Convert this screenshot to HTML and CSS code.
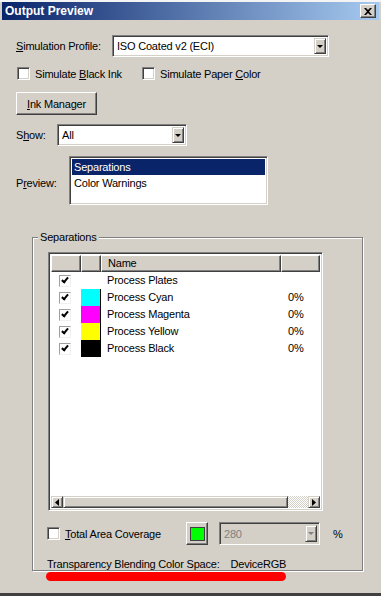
FILE: index.html
```html
<!DOCTYPE html>
<html lang="en">
<head>
<meta charset="UTF-8">
<title>Output Preview</title>
<link rel="stylesheet" href="styles.css">
</head>
<body>

<div class="window">
    <div class="titlebar">
        <span class="title">Output Preview</span>
        <span class="close-btn">
            <svg width="8" height="7" viewBox="0 0 8 7"><path d="M0 0h2l2 2 2-2h2L5 3.5 8 7H6L4 5 2 7H0l3-3.5z" fill="#000"/></svg>
        </span>
    </div>

    <div class="content">
        <div class="row row-profile">
            <span class="label"><u>S</u>imulation Profile:</span>
            <div class="combo combo-profile">
                <span class="combo-text">ISO Coated v2 (ECI)</span>
                <span class="combo-arrow"><i></i></span>
            </div>
        </div>

        <div class="row row-checks">
            <label class="check first"><span class="box"></span><span>Simulate <u>B</u>lack Ink</span></label>
            <label class="check"><span class="box"></span><span>Simulate Paper <u>C</u>olor</span></label>
        </div>

        <div class="row row-button">
            <span class="button"><span><u>I</u>nk Manager</span></span>
        </div>

        <div class="row row-show">
            <span class="label show-label">S<u>h</u>ow:</span>
            <div class="combo combo-show">
                <span class="combo-text">All</span>
                <span class="combo-arrow"><i></i></span>
            </div>
        </div>

        <div class="row row-preview">
            <span class="label preview-label">P<u>r</u>eview:</span>
            <div class="listbox">
                <div class="list-item selected">Separations</div>
                <div class="list-item">Color Warnings</div>
            </div>
        </div>

        <fieldset class="group">
            <legend>Separations</legend>

            <div class="listview">
                <div class="lv-header">
                    <span class="lv-col"></span>
                    <span class="lv-col"></span>
                    <span class="lv-col">Name</span>
                    <span class="lv-col"></span>
                </div>
                <div class="lv-body">
                    <div class="lv-row">
                        <span class="lv-check"><span class="tick"></span></span>
                        <span></span>
                        <span class="lv-name">Process Plates</span>
                        <span class="lv-pct"></span>
                    </div>
                    <div class="lv-row">
                        <span class="lv-check"><span class="tick"></span></span>
                        <span class="swatch cyan"></span>
                        <span class="lv-name">Process Cyan</span>
                        <span class="lv-pct">0%</span>
                    </div>
                    <div class="lv-row">
                        <span class="lv-check"><span class="tick"></span></span>
                        <span class="swatch magenta"></span>
                        <span class="lv-name">Process Magenta</span>
                        <span class="lv-pct">0%</span>
                    </div>
                    <div class="lv-row">
                        <span class="lv-check"><span class="tick"></span></span>
                        <span class="swatch yellow"></span>
                        <span class="lv-name">Process Yellow</span>
                        <span class="lv-pct">0%</span>
                    </div>
                    <div class="lv-row">
                        <span class="lv-check"><span class="tick"></span></span>
                        <span class="swatch black"></span>
                        <span class="lv-name">Process Black</span>
                        <span class="lv-pct">0%</span>
                    </div>
                </div>
                <div class="hscroll">
                    <span class="sb-btn"><svg width="4" height="7" viewBox="0 0 4 7"><path d="M4 0v7L0 3.5z" fill="#000"/></svg></span>
                    <span class="sb-thumb"></span>
                    <span class="sb-track"></span>
                    <span class="sb-btn"><svg width="4" height="7" viewBox="0 0 4 7"><path d="M0 0v7l4-3.5z" fill="#000"/></svg></span>
                </div>
            </div>

            <div class="coverage">
                <label class="check"><span class="box"></span><span><u>T</u>otal Area Coverage</span></label>
                <span class="color-btn"><span class="green"></span></span>
                <div class="combo combo-limit disabled">
                    <span class="combo-text">280</span>
                    <span class="combo-arrow"><i></i></span>
                </div>
                <span class="pct">%</span>
            </div>

            <div class="blend">
                <span>Transparency Blending Color Space:</span>
                <span>DeviceRGB</span>
            </div>
            <div class="mark"></div>
        </fieldset>
    </div>
</div>

</body>
</html>
```

FILE: styles.css
```css
body {
    margin: 0;
    font-family: "Liberation Sans", Arial, sans-serif;
    font-size: 11px;
    letter-spacing: -0.2px;
    color: #000;
    background-color: #d4d0c8;
}
u {
    text-decoration: underline;
    text-underline-offset: 1px;
}
.window {
    height: 596px;
    box-sizing: border-box;
    border-top: 2px solid #f4f4f4;
    border-bottom: 3px solid #404040;
    background-color: #d4d0c8;
}
.titlebar {
    height: 18px;
    margin: 0 2px;
    padding: 0 3px 0 3px;
    display: flex;
    align-items: center;
    justify-content: space-between;
    background: linear-gradient(to right, #0a246a, #a6caf0);
}
.title {
    color: #fff;
    font-weight: bold;
    font-size: 12px;
    letter-spacing: 0;
}
.close-btn {
    width: 16px;
    height: 14px;
    box-sizing: border-box;
    display: flex;
    align-items: center;
    justify-content: center;
    background-color: #d4d0c8;
    border-top: 1px solid #fff;
    border-left: 1px solid #fff;
    border-bottom: 1px solid #404040;
    border-right: 1px solid #404040;
    box-shadow: inset -1px -1px #808080;
}
.content {
    padding: 0 18px 0 16px;
}
.row {
    display: flex;
    align-items: center;
}
.row-profile {
    margin-top: 15px;
}
.label {
    width: 96px;
}
.show-label {
    width: 41px;
}
.preview-label {
    width: 53px;
    padding-top: 4px;
}

/* sunken fields */
.combo, .listbox, .listview {
    box-sizing: border-box;
    background-color: #fff;
    border-top: 1px solid #808080;
    border-left: 1px solid #808080;
    border-bottom: 1px solid #fff;
    border-right: 1px solid #fff;
    box-shadow: inset 1px 1px #404040, inset -1px -1px #d4d0c8;
}
.combo {
    display: flex;
    align-items: stretch;
    padding: 2px;
}
.combo-text {
    flex: 1;
    display: flex;
    align-items: center;
    padding-left: 2px;
}
.combo-arrow {
    width: 12px;
    box-sizing: border-box;
    display: flex;
    align-items: center;
    justify-content: center;
    background-color: #d4d0c8;
    border-top: 1px solid #d4d0c8;
    border-left: 1px solid #d4d0c8;
    border-bottom: 1px solid #404040;
    border-right: 1px solid #404040;
    box-shadow: inset 1px 1px #fff, inset -1px -1px #808080;
}
.combo-arrow i {
    width: 0;
    height: 0;
    border-left: 3px solid transparent;
    border-right: 3px solid transparent;
    border-top: 3px solid #000;
}
.combo-profile {
    width: 217px;
    height: 22px;
}
.combo-show {
    width: 130px;
    height: 22px;
}

/* checkboxes */
.row-checks {
    margin-top: 10px;
    padding-left: 1px;
}
.check {
    display: flex;
    align-items: center;
}
.check.first {
    width: 125px;
}
.box {
    width: 13px;
    height: 13px;
    box-sizing: border-box;
    margin-right: 5px;
    background-color: #fff;
    border-top: 1px solid #808080;
    border-left: 1px solid #808080;
    border-bottom: 1px solid #fff;
    border-right: 1px solid #fff;
    box-shadow: inset 1px 1px #404040, inset -1px -1px #d4d0c8;
}

.row-button {
    margin-top: 12px;
}
.button {
    width: 81px;
    height: 23px;
    box-sizing: border-box;
    display: flex;
    align-items: center;
    justify-content: center;
    border-top: 1px solid #fff;
    border-left: 1px solid #fff;
    border-bottom: 1px solid #404040;
    border-right: 1px solid #404040;
    box-shadow: inset -1px -1px #808080;
}

.row-show {
    margin-top: 9px;
}
.row-preview {
    margin-top: 10px;
}
.listbox {
    width: 199px;
    height: 49px;
    padding: 2px;
}
.list-item {
    height: 16px;
    line-height: 16px;
    padding-left: 2px;
}
.list-item.selected {
    background-color: #0a246a;
    color: #fff;
}

/* group box */
.group {
    margin: 26px 0 0 16px;
    padding: 8px 14px 0 15px;
    height: 340px;
    box-sizing: border-box;
    border: 1px solid #808080;
    box-shadow: inset 1px 1px #fff, 1px 1px #fff;
}
.group legend {
    padding: 0 2px;
    margin-left: -10px;
    line-height: 13px;
    background-color: #d4d0c8;
}

.listview {
    width: 275px;
    height: 259px;
    padding: 2px;
    display: flex;
    flex-direction: column;
}
.lv-header, .lv-row {
    display: grid;
    grid-template-columns: 30px 20px 180px 1fr;
}
.lv-header {
    height: 17px;
    background-color: #d4d0c8;
}
.lv-col {
    box-sizing: border-box;
    padding-left: 6px;
    line-height: 15px;
    border-top: 1px solid #fff;
    border-left: 1px solid #fff;
    border-bottom: 1px solid #404040;
    border-right: 1px solid #404040;
    box-shadow: inset -1px -1px #808080;
}
.lv-body {
    flex: 1;
}
.lv-row {
    height: 17px;
    line-height: 17px;
}
.lv-check {
    display: flex;
    align-items: center;
    justify-content: center;
    padding-right: 2px;
}
.tick {
    width: 12px;
    height: 12px;
    box-sizing: border-box;
    border: 1px solid #a0a0a0;
    border-right-color: #f0f0f0;
    border-bottom-color: #f0f0f0;
    background-color: #fff;
    position: relative;
}
.tick::after {
    content: "";
    position: absolute;
    left: 3px;
    top: 0px;
    width: 2px;
    height: 5px;
    border-right: 2px solid #000;
    border-bottom: 2px solid #000;
    transform: rotate(40deg);
}
.swatch {
    border-right: 1px solid #000;
}
.cyan { background-color: #00ffff; }
.magenta { background-color: #ff00ff; }
.yellow { background-color: #ffff00; }
.black { background-color: #000; }
.lv-name {
    padding-left: 6px;
}
.lv-pct {
    padding-left: 7px;
}

.hscroll {
    height: 12px;
    display: flex;
    background-color: #d4d0c8;
}
.sb-btn, .sb-thumb {
    box-sizing: border-box;
    display: flex;
    align-items: center;
    justify-content: center;
    border-top: 1px solid #d4d0c8;
    border-left: 1px solid #d4d0c8;
    border-bottom: 1px solid #404040;
    border-right: 1px solid #404040;
    box-shadow: inset 1px 1px #fff, inset -1px -1px #808080;
}
.sb-btn {
    width: 12px;
}
.sb-thumb {
    width: 225px;
}
.sb-track {
    flex: 1;
    background-color: #eae8e4;
    background-image: repeating-conic-gradient(#fff 0 25%, #d4d0c8 0 50%);
    background-size: 2px 2px;
}

.coverage {
    display: flex;
    align-items: center;
    margin-top: 11px;
    margin-left: -1px;
}
.coverage .check {
    width: 139px;
}
.color-btn {
    width: 22px;
    height: 23px;
    box-sizing: border-box;
    display: flex;
    align-items: center;
    justify-content: center;
    border-top: 1px solid #fff;
    border-left: 1px solid #fff;
    border-bottom: 1px solid #404040;
    border-right: 1px solid #404040;
    box-shadow: inset -1px -1px #808080;
}
.green {
    width: 13px;
    height: 12px;
    background-color: #00ff00;
    border: 1px solid #404040;
}
.combo-limit {
    width: 101px;
    height: 23px;
    margin-left: 11px;
}
.combo.disabled {
    background-color: #d4d0c8;
    color: #808080;
}
.combo.disabled .combo-arrow i {
    border-top-color: #808080;
}
.pct {
    margin-left: 13px;
}

.blend {
    display: flex;
    gap: 11px;
    margin-top: 13px;
    margin-left: -1px;
}
.mark {
    width: 240px;
    height: 9px;
    margin: 2px 0 0 -2px;
    border-radius: 5px;
    background-color: #ff0000;
}
```
